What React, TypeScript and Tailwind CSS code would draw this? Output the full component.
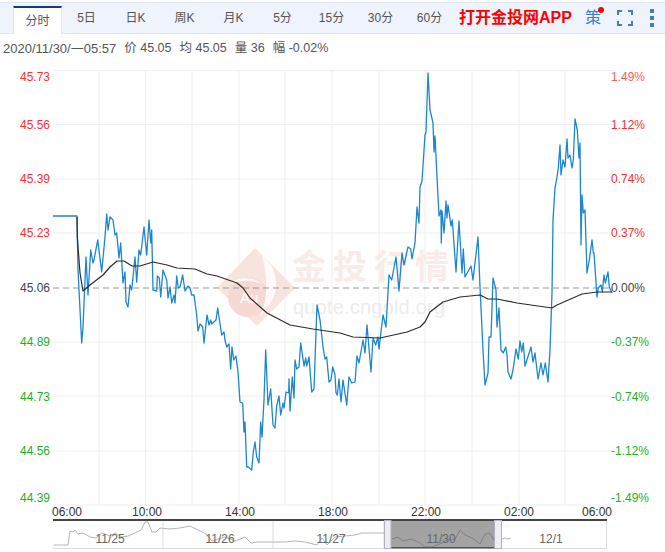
const tabs = ['分时', '5日', '日K', '周K', '月K', '5分', '15分', '30分', '60分']

const leftAxis = [
  ['45.73', 81, '#ff2d2d'],
  ['45.56', 129, '#ff2d2d'],
  ['45.39', 183, '#ff2d2d'],
  ['45.23', 237, '#ff2d2d'],
  ['45.06', 292, '#444444'],
  ['44.89', 346, '#1eb01e'],
  ['44.73', 401, '#1eb01e'],
  ['44.56', 455, '#1eb01e'],
  ['44.39', 502, '#1eb01e'],
] as const

const rightAxis = [
  ['1.49%', 81, '#ff5a5a'],
  ['1.12%', 129, '#ff2d2d'],
  ['0.74%', 183, '#ff2d2d'],
  ['0.37%', 237, '#ff2d2d'],
  ['0.00%', 292, '#444444'],
  ['-0.37%', 346, '#1eb01e'],
  ['-0.74%', 401, '#1eb01e'],
  ['-1.12%', 455, '#1eb01e'],
  ['-1.49%', 502, '#1eb01e'],
] as const

const hLines = [70.5, 124.5, 179, 233, 342, 396, 451, 505]
const vLines = [99, 145.5, 192, 239, 285, 332, 379, 425, 472, 519, 565]
const times = [
  ['06:00', 67],
  ['10:00', 147],
  ['14:00', 240],
  ['18:00', 333],
  ['22:00', 426],
  ['02:00', 519],
  ['06:00', 597],
] as const

const price =
  '53,216 77,216 78,270 81.7,343 83,327 86,257 88,295 90.7,250 93,263 94,260 97.7,240 101.7,272 105,237 106.7,214 108,230 110,217 113,220 115,235 116.7,233 119,258 120.7,243 123,283 125,272 126,302 128,307 130,285 131.7,290 135,257 136.7,282 139,250 140.7,255 144,227 146.7,255 149,220 150.7,243 151.7,230 153,290 156.7,291 157.3,276 159.3,278 160.7,297 163,270 166.7,280 168,298 170,287 171.7,303 174,295 175,303 176.7,276 178.3,288 180,287 182.7,275 185,291 188,286 190,288 191.7,295 194,295 196.7,315 198,331 200,324 202.7,327 204,343 207,315 209,325 210.7,320 211.7,324 216,320 217.7,308 221.7,335 224,332 225,340 226.7,347 229,344 230.7,369 232,347 233.7,360 236,356 238,372 240,402 242.7,403 244,432 245,422 246.7,467 248.3,467 251.7,470 253.3,452 255,442 256.7,457 259,463 260.7,422 262,437 264,400 265.7,350 268,405 270.7,389 273,425 275,428 276.7,406 279,396 280.7,415 283,403 284,408 286,392 288.7,393 289,379 290,411 292.3,377 294,398 295,360 296.7,369 299,367 300.7,343 304,366 305.7,358 306.7,366 309,357 311.7,392 314,389 317,305 320,320 323,347 325,359 326.7,357 329,382 331,380 332.7,367 335,375 336,393 337.3,395 339,379 341,402 343,380 346.7,405 349,377 351.7,383 355,382 357,356 359,363 363,340 365,353 367,325 371,372 373,338 375.7,345 378,337 379,349 383,315 386,327 389,275 391.7,280 396,257 399,291 402,253 404,265 408,247 410.7,249 412,259 415,243 417,207 419,223 420,187 422,181 425,135 426,132 428,73 430,110 433,123 434,152 435,136 437,177 439,216 441,210 441.3,243 442,211 444,233 446,201 447,218 448,205 451,226 452.3,220 456,272 459,221 462,273 463.3,249 465,277 471,266 473,280 478,237 480,287 483,350 485,385 488,373 489,337 491,337 493,278 496,290 497,327 499,308 501,350 503.3,353 505.7,347 507,355 508,372 511,379 513,370 516,349 518.3,359 520,341 521.7,352 523.3,343 525,366 531,347 533,362 535,353 538,379 541,363 543,375 545.3,363 548,382 550,350 552,293 553,220 555,188 557,177 558.3,168 560,145 561,175 563,160 565,167 567,139 568,158 570,155 572,168 573.3,160 575,119 577.3,130 579,158 580,143 581,245 582,195 583.3,213 585,210 587,273 589.3,260 592,240 593.3,253 594,253 597,297 598.3,288 601,285 602.3,292 604,275 605.3,283 608,272 609.3,287 612,293'

const avg =
  '77,217 77.3,237 80,273 83,291 90,285 103,275 110,267 117,261 124,261 132,266 140,266 153,262 167,265 177,268 195,269 207,274 217,276 237,283 243,288 250,298 267,313 290,325 313,329 340,333 353,337 380,338 407,332 420,327 425,322 430,312 443,302 460,297 480,295 488,299 497,299 517,303 552,308 557,305 582,294 597,292 612,292'

const nav1 =
  '54,545 68,545 70,531 73,532 75,530 78,534 83,533 90,537 96,538 102,533 110,536 115,533 122,537 128,536 135,533 141,530 145,522 148,522 152,532 156,532 160,528 170,529 180,528 190,526 200,531 206,534 212,541 225,537 235,541 245,537 251,543 257,542 272,542 285,542 295,541 305,542 317,545 322,538 327,545 335,537 345,536 355,535 362,533 372,533 384,533'
const nav2 =
  '392,539 398,537 403,541 411,539 420,543 425,547 432,547 442,543 447,540 455,539 460,530 465,535 472,538 480,544 485,534 490,533 494,540'

function Watermark() {
  return (
    <g>
      <path d="M255 248 L295 288 L257 326 L217 288 Z" fill="#f8e4df" />
      <circle cx="248" cy="297" r="20" fill="#f5d9d2" />
      <path
        d="M262 255 C277 268 280 288 271 302 C268 308 264 312 260 316 C268 300 268 278 262 255 Z"
        fill="#ffffff"
        opacity="0.8"
      />
      <path d="M229 285 C238 276 252 276 262 284 C252 280 238 280 229 285 Z" fill="#ffffff" opacity="0.8" />
      <text x="240" y="303" fontSize="15" fill="#ffffff" fontFamily='"Liberation Sans", sans-serif'>
        Au
      </text>
      <text
        x="292"
        y="279"
        fontSize="34"
        letterSpacing="7"
        fontWeight="700"
        fill="#f8ebe8"
        fontFamily='"Noto Sans CJK SC", sans-serif'
      >
        金投行情
      </text>
      <text x="293" y="314" fontSize="20" letterSpacing="0.2" fill="#ececec" fontFamily='"Liberation Sans", sans-serif'>
        quote.cngold.org
      </text>
    </g>
  )
}

function Chart() {
  return (
    <svg width="665" height="462" viewBox="0 57 665 462" className="block" fontFamily='"Liberation Sans", sans-serif'>
      {hLines.map((y) => (
        <line key={y} x1="53" x2="613" y1={y} y2={y} stroke="#eeeeee" />
      ))}
      {vLines.map((x) => (
        <line key={x} x1={x} x2={x} y1="70" y2="505" stroke="#eeeeee" />
      ))}
      <Watermark />
      <line x1="53" x2="613" y1="288" y2="288" stroke="#999999" strokeDasharray="6 4" />
      <polyline points={price} fill="none" stroke="#1c87cf" strokeWidth="1.3" strokeLinejoin="round" />
      <polyline points={avg} fill="none" stroke="#2b2b2b" strokeWidth="1.2" strokeLinejoin="round" />
      {leftAxis.map(([t, y, c]) => (
        <text key={t} x="50" y={y} textAnchor="end" fontSize="12" fill={c}>
          {t}
        </text>
      ))}
      {rightAxis.map(([t, y, c]) => (
        <text key={t} x="611" y={y} fontSize="12" fill={c}>
          {t}
        </text>
      ))}
      {times.map(([t, x], i) => (
        <text key={i} x={x} y="516" textAnchor="middle" fontSize="12" fill="#333333">
          {t}
        </text>
      ))}
    </svg>
  )
}

function Navigator() {
  return (
    <svg width="665" height="33" viewBox="0 519 665 33" className="block" fontFamily='"Liberation Sans", sans-serif'>
      <rect x="391" y="520" width="104" height="28" fill="#a3a3a3" />
      {[163, 273, 384].map((x) => (
        <line key={x} x1={x} x2={x} y1="520" y2="548" stroke="#dddddd" />
      ))}
      <line x1="606.5" x2="606.5" y1="520" y2="548" stroke="#dddddd" />
      <line x1="53" x2="607" y1="548.5" y2="548.5" stroke="#dddddd" />
      <polyline points={nav1} fill="none" stroke="#b5b5b5" strokeWidth="1" />
      <polyline points={nav2} fill="none" stroke="#808080" strokeWidth="1" />
      <polyline points="502,539 505,538 507,539 511,538" fill="none" stroke="#b5b5b5" />
      <rect x="53" y="519" width="554" height="2" fill="#444444" />
      <rect x="391" y="547" width="104" height="1.5" fill="#555555" />
      <rect x="384.5" y="520.5" width="6.5" height="28" fill="#eeeef2" stroke="#b0b0c0" />
      <rect x="494.5" y="520.5" width="7" height="28" fill="#eeeef2" stroke="#b0b0c0" />
      {[
        ['11/25', 110],
        ['11/26', 220],
        ['11/27', 331],
        ['11/30', 441],
        ['12/1', 551],
      ].map(([t, x]) => (
        <text key={t} x={x} y="543" textAnchor="middle" fontSize="12" fill="#666666">
          {t}
        </text>
      ))}
    </svg>
  )
}

export default function App() {
  return (
    <div className="w-[665px] h-[552px] bg-white overflow-hidden font-['Liberation_Sans','Noto_Sans_CJK_SC',sans-serif]">
      <div className="mt-[2px] h-[32px] flex items-stretch pl-[13px] bg-[#eef3fc] border-y border-[#dfe5f0]">
        {tabs.map((label, i) => (
          <div
            key={label}
            className={
              i === 0
                ? 'w-[49px] mt-[3px] -mb-px bg-white border-t-2 border-t-[#123b8c] border-x border-x-[#dfe5f0] flex items-center justify-center text-[12px] text-[#555555]'
                : 'w-[49px] flex items-center justify-center text-[12px] text-[#555555]'
            }
          >
            {label}
          </div>
        ))}
        <div className="ml-[5px] flex items-center text-[16px] font-bold text-[#ff0000] whitespace-nowrap">打开金投网APP</div>
        <div className="ml-[13px] relative flex items-center text-[16px] text-[#3f7ec4]">
          策
          <span className="absolute right-[-3px] top-[4px] w-[6px] h-[6px] rounded-full bg-[#ff0000]" />
        </div>
        <div className="ml-[16px] flex items-center">
          <svg width="16" height="16" viewBox="0 0 16 16" fill="none" stroke="#3f7ec4" strokeWidth="2">
            <path d="M1 5V1H5M11 1H15V5M15 11V15H11M5 15H1V11" />
          </svg>
        </div>
        <div className="ml-[17px] flex flex-col items-center justify-center gap-[3px]">
          <span className="w-[4px] h-[4px] bg-[#3f7ec4]" />
          <span className="w-[4px] h-[4px] bg-[#3f7ec4]" />
          <span className="w-[4px] h-[4px] bg-[#3f7ec4]" />
        </div>
      </div>
      <div className="h-[17px] mt-[6px] pl-[3px] flex items-center gap-[8px] text-[12.5px] text-[#555555] whitespace-nowrap">
        <span className="text-[13px]">2020/11/30/一05:57</span>
        <span>价 45.05</span>
        <span>均 45.05</span>
        <span>量 36</span>
        <span>幅 -0.02%</span>
      </div>
      <Chart />
      <Navigator />
    </div>
  )
}
